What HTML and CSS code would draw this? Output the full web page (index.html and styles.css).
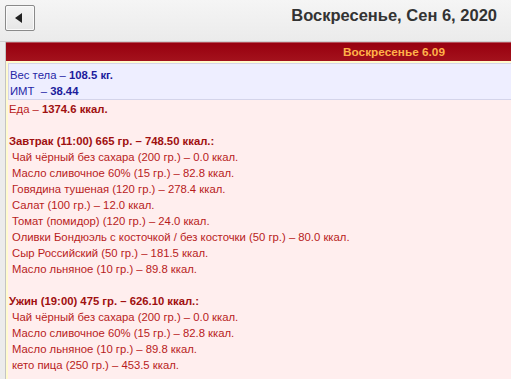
FILE: index.html
```html
<!DOCTYPE html>
<html lang="ru">
<head>
    <meta charset="UTF-8">
    <meta name="viewport" content="width=device-width, initial-scale=1.0">
    <title>Дневник питания</title>
    <link rel="stylesheet" href="styles.css">
</head>
<body>
    <div class="topbar">
        <button class="back" type="button">
            <svg width="8" height="10" viewBox="0 0 8 10"><path d="M7 0 L7 10 L0 5 Z" fill="#222"/></svg>
        </button>
        <div class="title">Воскресенье, Сен 6, 2020</div>
    </div>

    <div class="day">
        <div class="day-head">Воскресенье 6.09</div>
        <div class="day-inner">
            <div class="stats">
                <div class="line">Вес тела – <b>108.5 кг.</b></div>
                <div class="line">ИМТ &nbsp;– <b>38.44</b></div>
            </div>
            <div class="food">
                <div class="line">Еда – <b>1374.6 ккал.</b></div>
                <div class="line">&nbsp;</div>
                <div class="line meal">Завтрак (11:00) 665 гр. – 748.50 ккал.:</div>
                <div class="line item">Чай чёрный без сахара (200 гр.) – 0.0 ккал.</div>
                <div class="line item">Масло сливочное 60% (15 гр.) – 82.8 ккал.</div>
                <div class="line item">Говядина тушеная (120 гр.) – 278.4 ккал.</div>
                <div class="line item">Салат (100 гр.) – 12.0 ккал.</div>
                <div class="line item">Томат (помидор) (120 гр.) – 24.0 ккал.</div>
                <div class="line item">Оливки Бондюэль с косточкой / без косточки (50 гр.) – 80.0 ккал.</div>
                <div class="line item">Сыр Российский (50 гр.) – 181.5 ккал.</div>
                <div class="line item">Масло льняное (10 гр.) – 89.8 ккал.</div>
                <div class="line">&nbsp;</div>
                <div class="line meal">Ужин (19:00) 475 гр. – 626.10 ккал.:</div>
                <div class="line item">Чай чёрный без сахара (200 гр.) – 0.0 ккал.</div>
                <div class="line item">Масло сливочное 60% (15 гр.) – 82.8 ккал.</div>
                <div class="line item">Масло льняное (10 гр.) – 89.8 ккал.</div>
                <div class="line item">кето пица (250 гр.) – 453.5 ккал.</div>
            </div>
        </div>
    </div>
</body>
</html>
```

FILE: styles.css
```css
body {
    margin: 0;
    height: 100vh;
    display: flex;
    flex-direction: column;
    background: #ececec;
    font-family: "Liberation Sans", Arial, sans-serif;
    overflow: hidden;
}

.topbar {
    height: 41px;
    flex-shrink: 0;
    display: flex;
    align-items: flex-start;
    justify-content: space-between;
    padding: 0 14px 0 5px;
    background: linear-gradient(#f5f5f5, #ebebeb);
    border-bottom: 1px solid #d0d0d0;
}

.back {
    width: 30px;
    height: 26px;
    margin-top: 5px;
    display: flex;
    align-items: center;
    justify-content: center;
    padding: 0 2px 0 0;
    background: linear-gradient(#f4f4f4, #e6e6e6);
    border: 1px solid #8a8a8a;
    border-radius: 2px;
    box-shadow: inset 0 0 0 1px #fafafa;
}

.title {
    margin-top: 5px;
    font-size: 16.5px;
    font-weight: bold;
    color: #333;
    line-height: 20px;
}

.day {
    flex: 1;
    display: flex;
    flex-direction: column;
    margin-left: 5px;
    border-left: 1px solid #c4c4c4;
}

.day-head {
    height: 18px;
    flex-shrink: 0;
    line-height: 18px;
    padding-right: 66px;
    text-align: right;
    font-size: 11.8px;
    font-weight: bold;
    color: #ffb24a;
    background: linear-gradient(#98000f, #a3121c);
    border-top: 1px solid #b5505a;
}

.day-inner {
    flex: 1;
    display: flex;
    flex-direction: column;
    padding: 2px 0 0 2px;
    background: #fffbcf;
}

.stats {
    padding: 3px 0 0 1px;
    background: #eeeeff;
    border: 1px solid #d4d4ea;
    border-right: none;
    color: #2626a6;
}

.stats b {
    color: #1c1c9c;
}

.food {
    flex: 1;
    padding: 1px 0 0 1px;
    background: #ffeeee;
    color: #b81c1c;
}

.food b,
.meal {
    font-weight: bold;
    color: #a01010;
}

.line {
    font-size: 11.3px;
    line-height: 16px;
    white-space: nowrap;
}

.item {
    padding-left: 3px;
}
```
